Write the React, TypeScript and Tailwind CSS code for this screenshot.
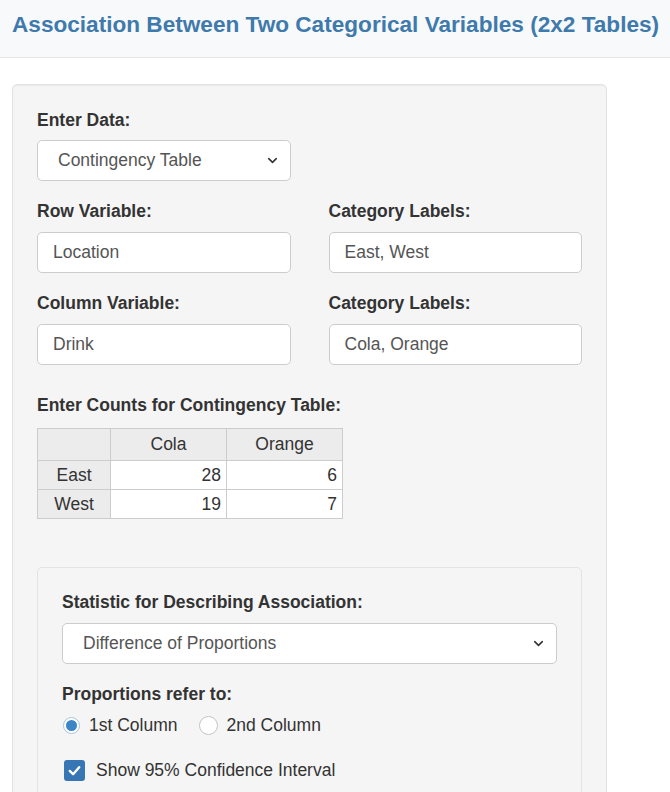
import { ChevronDown } from "lucide-react"

function Label({ children, className = "" }: { children: React.ReactNode; className?: string }) {
  return <div className={`h-6 leading-6 font-bold text-[17.5px] text-[#333] ${className}`}>{children}</div>
}

function FakeSelect({ value, className = "" }: { value: string; className?: string }) {
  return (
    <div
      className={`h-[41px] flex items-center justify-between bg-white border border-[#ccc] rounded-[5px] pl-5 pr-2.5 text-[17.5px] text-[#555] ${className}`}
    >
      <span>{value}</span>
      <ChevronDown className="w-[15px] h-[15px] text-[#333]" strokeWidth={2.5} />
    </div>
  )
}

function TextBox({ value }: { value: string }) {
  return (
    <div className="h-[41px] flex items-center bg-white border border-[#ccc] rounded-[5px] px-[15px] text-[17.5px] text-[#555]">
      {value}
    </div>
  )
}

export default function App() {
  const rows = [
    { name: "East", counts: [28, 6] },
    { name: "West", counts: [19, 7] },
  ]

  return (
    <div className="min-h-screen bg-white font-['Liberation_Sans',Arial,sans-serif] text-[#333]">
      {/* Title bar */}
      <div className="h-[58px] bg-[#f8f9fa] border-b border-[#e5e5e5] pl-3 pt-[9px] overflow-hidden">
        <h1 className="text-[22.6px] font-bold leading-[32px] text-[#3f7aac] whitespace-nowrap">
          Association Between Two Categorical Variables (2x2 Tables)
        </h1>
      </div>

      <div className="pl-3 pt-[26px]">
        <div className="w-[595px] bg-[#f5f5f5] border border-[#e3e3e3] rounded-[5px] px-6 pt-[23px] pb-10 shadow-[inset_0_1px_1px_rgba(0,0,0,0.05)]">
          <Label className="mb-2">Enter Data:</Label>
          <FakeSelect value="Contingency Table" className="w-[254px]" />

          <div className="grid grid-cols-2 gap-x-[38px] mt-[18px]">
            <div>
              <Label className="mb-[9px]">Row Variable:</Label>
              <TextBox value="Location" />
            </div>
            <div>
              <Label className="mb-[9px]">Category Labels:</Label>
              <TextBox value="East, West" />
            </div>
          </div>

          <div className="grid grid-cols-2 gap-x-[38px] mt-[18px]">
            <div>
              <Label className="mb-[9px]">Column Variable:</Label>
              <TextBox value="Drink" />
            </div>
            <div>
              <Label className="mb-[9px]">Category Labels:</Label>
              <TextBox value="Cola, Orange" />
            </div>
          </div>

          <Label className="mt-[28px] mb-[11px]">Enter Counts for Contingency Table:</Label>
          <table className="border-collapse text-[17.5px] text-[#333]">
            <thead>
              <tr className="h-[32px]">
                <th className="w-[73px] border border-[#ccc] bg-[#ececec]"></th>
                <th className="w-[116px] border border-[#ccc] bg-[#ececec] font-normal">Cola</th>
                <th className="w-[116px] border border-[#ccc] bg-[#ececec] font-normal">Orange</th>
              </tr>
            </thead>
            <tbody>
              {rows.map((r) => (
                <tr key={r.name} className="h-[29px]">
                  <td className="border border-[#ccc] bg-[#ececec] text-center">{r.name}</td>
                  {r.counts.map((c, i) => (
                    <td key={i} className="border border-[#ccc] bg-white text-right pr-[5px]">
                      {c}
                    </td>
                  ))}
                </tr>
              ))}
            </tbody>
          </table>

          {/* Statistic panel */}
          <div className="mt-[48px] bg-[#f5f5f5] border border-[#e3e3e3] rounded-[5px] px-6 pt-[22px] pb-10">
            <Label className="mb-[9px]">Statistic for Describing Association:</Label>
            <FakeSelect value="Difference of Proportions" />

            <Label className="mt-[18px] mb-[9px]">Proportions refer to:</Label>
            <div className="flex items-center h-5 text-[17.5px] text-[#333]">
              <div className="w-[17px] h-[17px] rounded-full border border-[#a9c3dd] bg-white flex items-center justify-center ml-px">
                <div className="w-[11px] h-[11px] rounded-full bg-[#3b84c6]" />
              </div>
              <span className="ml-[9px]">1st Column</span>
              <div className="w-[19px] h-[19px] rounded-full border border-[#c4c4c4] bg-white ml-[21px]" />
              <span className="ml-[9px]">2nd Column</span>
            </div>

            <div className="flex items-center mt-[22px] text-[17.5px] text-[#333]">
              <div className="w-[21px] h-[21px] rounded-[3px] bg-[#3776b4] flex items-center justify-center ml-0.5">
                <svg viewBox="0 0 16 16" className="w-[15px] h-[15px]" fill="none" stroke="white" strokeWidth="2.6" strokeLinecap="round" strokeLinejoin="round">
                  <path d="M3 8.5 L6.5 12 L13 4.5" />
                </svg>
              </div>
              <span className="ml-[11px]">Show 95% Confidence Interval</span>
            </div>
          </div>
        </div>
      </div>
    </div>
  )
}
